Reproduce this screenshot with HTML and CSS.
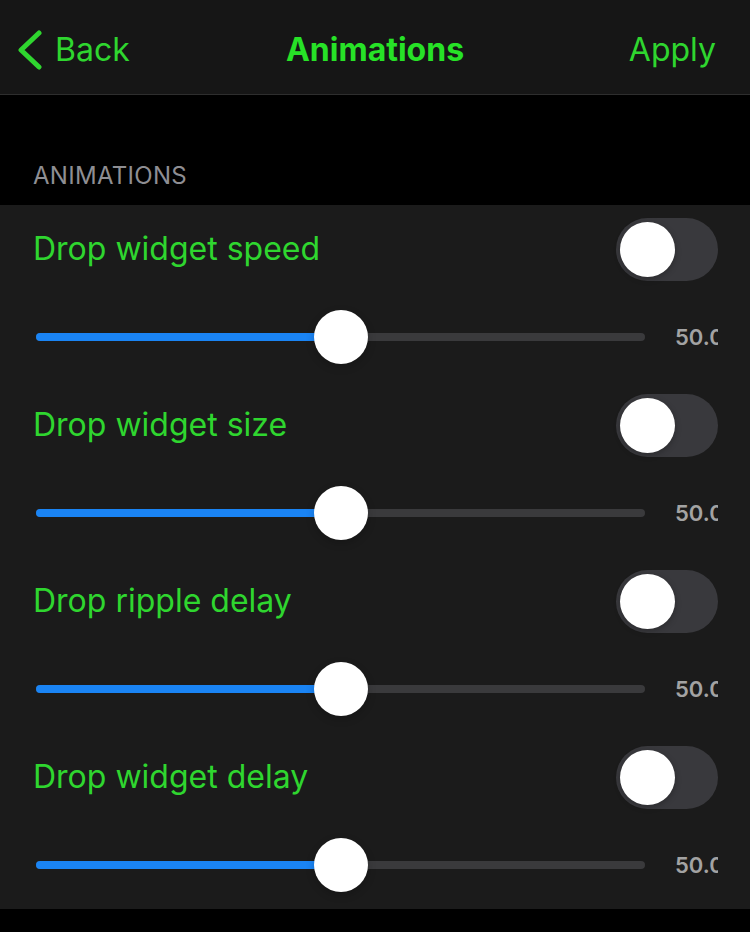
FILE: index.html
```html
<!DOCTYPE html>
<html lang="en">
<head>
    <meta charset="UTF-8">
    <meta name="viewport" content="width=device-width, initial-scale=1.0">
    <title>Animations</title>
    <link rel="stylesheet" href="styles.css">
</head>
<body>
    <!-- Barra de navegación -->
    <header class="nav">
        <a class="nav-back" href="#">
            <svg class="chevron" width="26" height="40" viewBox="0 0 26 40">
                <polyline points="22,3 4,20 22,37" fill="none" stroke="currentColor" stroke-width="5" stroke-linecap="round" stroke-linejoin="round"/>
            </svg>
            <span>Back</span>
        </a>
        <h1 class="nav-title">Animations</h1>
        <a class="nav-apply" href="#">Apply</a>
    </header>

    <div class="section-header">ANIMATIONS</div>

    <!-- Lista de ajustes -->
    <section class="card">
        <div class="item">
            <div class="item-head">
                <span class="item-title">Drop widget speed</span>
                <span class="toggle"><span class="knob"></span></span>
            </div>
            <div class="slider-row">
                <div class="track">
                    <div class="fill" style="width: 50%;"></div>
                    <div class="thumb" style="left: 50%;"></div>
                </div>
                <div class="value">50.00</div>
            </div>
        </div>

        <div class="item">
            <div class="item-head">
                <span class="item-title">Drop widget size</span>
                <span class="toggle"><span class="knob"></span></span>
            </div>
            <div class="slider-row">
                <div class="track">
                    <div class="fill" style="width: 50%;"></div>
                    <div class="thumb" style="left: 50%;"></div>
                </div>
                <div class="value">50.00</div>
            </div>
        </div>

        <div class="item">
            <div class="item-head">
                <span class="item-title">Drop ripple delay</span>
                <span class="toggle"><span class="knob"></span></span>
            </div>
            <div class="slider-row">
                <div class="track">
                    <div class="fill" style="width: 50%;"></div>
                    <div class="thumb" style="left: 50%;"></div>
                </div>
                <div class="value">50.00</div>
            </div>
        </div>

        <div class="item">
            <div class="item-head">
                <span class="item-title">Drop widget delay</span>
                <span class="toggle"><span class="knob"></span></span>
            </div>
            <div class="slider-row">
                <div class="track">
                    <div class="fill" style="width: 50%;"></div>
                    <div class="thumb" style="left: 50%;"></div>
                </div>
                <div class="value">50.00</div>
            </div>
        </div>
    </section>
</body>
</html>
```

FILE: styles.css
```css
body {
    margin: 0;
    padding: 0;
    background-color: #000;
    font-family: Inter, "Liberation Sans", sans-serif;
    color: #fff;
}
.nav {
    display: grid;
    grid-template-columns: 1fr auto 1fr;
    align-items: center;
    height: 89px;
    padding: 5px 34px 0;
    background-color: #161616;
    border-bottom: 1px solid #2e2e2e;
}
.nav a {
    color: #2fd62f;
    text-decoration: none;
    font-size: 32px;
}
.nav-back {
    display: flex;
    align-items: center;
    gap: 12px;
    justify-self: start;
    margin-left: -17px;
}
.chevron {
    display: block;
    margin-top: 1px;
}
.nav-title {
    margin: 0;
    font-size: 32px;
    font-weight: 700;
    color: #27e227;
}
.nav-apply {
    justify-self: end;
}
.section-header {
    padding: 66px 33px 15px;
    font-size: 24px;
    color: #8e8e93;
    letter-spacing: 0.3px;
}
.card {
    background-color: #1b1b1b;
}
.item {
    padding: 13px 32px 0 33px;
}
.item-head {
    display: flex;
    justify-content: space-between;
    align-items: center;
    height: 63px;
}
.item-title {
    font-size: 32px;
    color: #2fd62f;
    margin-top: -2px;
}
.toggle {
    position: relative;
    width: 102px;
    height: 63px;
    border-radius: 32px;
    background-color: #39393d;
}
.knob {
    position: absolute;
    top: 4px;
    left: 4px;
    width: 55px;
    height: 55px;
    border-radius: 50%;
    background-color: #fff;
    box-shadow: 0 2px 6px rgba(0, 0, 0, 0.25);
}
.slider-row {
    display: flex;
    align-items: center;
    gap: 30px;
    height: 88px;
    margin-top: 12px;
    margin-left: 3px;
}
.track {
    position: relative;
    flex: 0 0 609px;
    height: 8px;
    border-radius: 4px;
    background-color: #3a3a3c;
}
.fill {
    height: 100%;
    border-radius: 4px;
    background-color: #1a84f4;
}
.thumb {
    position: absolute;
    top: 50%;
    width: 54px;
    height: 54px;
    margin: -27px 0 0 -27px;
    border-radius: 50%;
    background-color: #fff;
    box-shadow: 0 3px 8px rgba(0, 0, 0, 0.2);
}
.value {
    width: 44px;
    overflow: hidden;
    white-space: nowrap;
    font-size: 22px;
    font-weight: 600;
    color: #a3a3a3;
}
```
